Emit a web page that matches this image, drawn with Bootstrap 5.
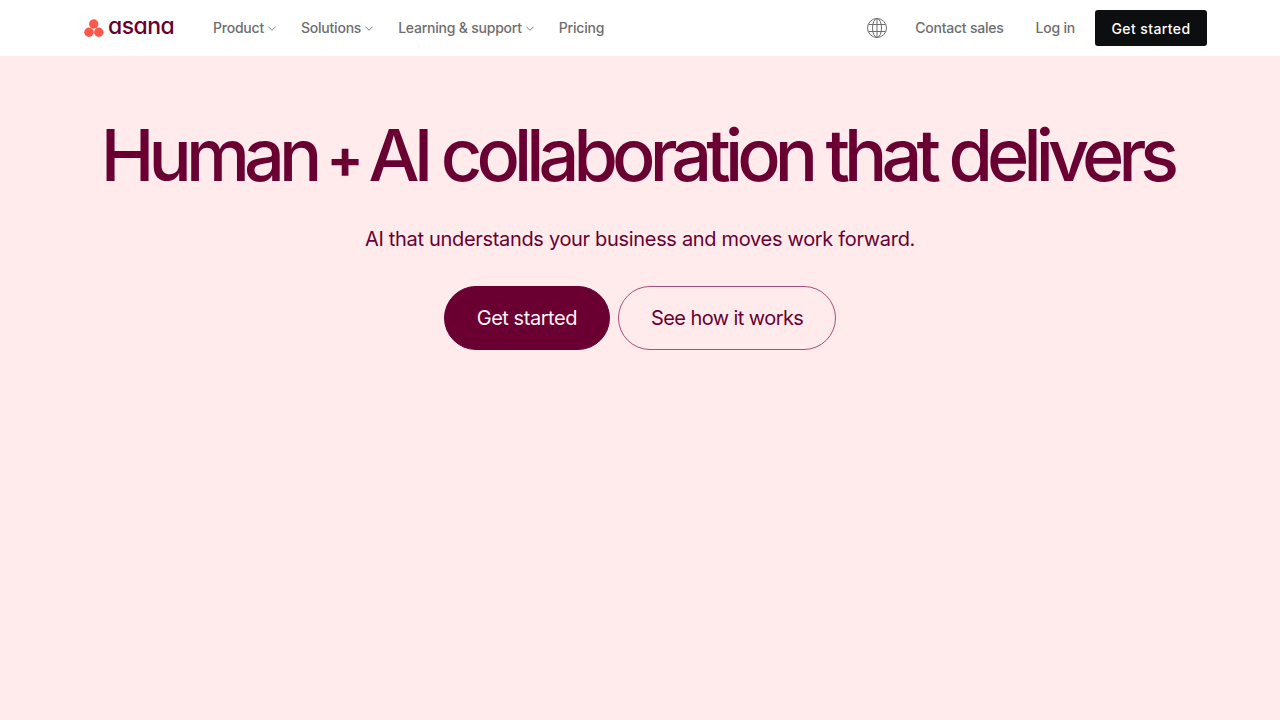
<!DOCTYPE html>
<html lang="en">
<head>
  <meta charset="UTF-8">
  <meta name="viewport" content="width=device-width, initial-scale=1.0">
  <title>Asana</title>
  <link href="https://cdn.jsdelivr.net/npm/bootstrap@5.3.0/dist/css/bootstrap.min.css" rel="stylesheet">
  <style>
    body {
      background: #ffeaec;
      font-family: Inter, "Liberation Sans", sans-serif;
      height: 720px;
      overflow: hidden;
    }
    .top-bar {
      height: 56px;
      background: #fff;
      padding: 0 73px 0 84px;
    }
    .brand-link {
      display: flex;
      align-items: center;
      gap: 4px;
      width: 104px;
      text-decoration: none;
    }
    .brand-word {
      color: #690031;
      font-size: 23px;
      line-height: 24px;
      font-weight: 500;
      letter-spacing: -.55px;
      font-feature-settings: "cv11";
      position: relative;
      top: -2px;
    }
    .top-link {
      color: #6d6e6f;
      font-size: 14px;
      font-weight: 500;
      line-height: 20px;
      letter-spacing: -.22px;
      text-decoration: none;
      white-space: nowrap;
    }
    .menu-item { display: flex; align-items: center; gap: 4px; }
    .left-menu { gap: 25px; }
    .right-menu { gap: 32px; }
    .globe-icon { margin-right: -4px; }
    .btn-nav {
      background: #0d0e10;
      color: #fff;
      font-size: 14px;
      font-weight: 500;
      letter-spacing: .4px;
      width: 112px;
      height: 36px;
      padding: 0;
      border: 0;
      border-radius: 3px;
      margin-left: -12px;
    }
    .hero-title {
      color: #690031;
      font-size: 72px;
      line-height: 80px;
      font-weight: 500;
      letter-spacing: -5.9px;
      margin: 0;
      padding: 59px 6px 0 0;
      white-space: nowrap;
    }
    .hero-plus { font-size: 54px; font-weight: 700; line-height: 0; letter-spacing: -5px; vertical-align: 3px; margin: 0 -3px; }
    .hero-sub {
      color: #690031;
      font-size: 20px;
      line-height: 28px;
      letter-spacing: -.32px;
      margin: 0;
      padding-top: 30px;
    }
    .hero-actions { gap: 8px; padding-top: 33px; }
    .btn-hero {
      height: 64px;
      border-radius: 32px;
      font-size: 20px;
      font-weight: 400;
      padding: 0 32px;
      display: flex;
      align-items: center;
    }
    .btn-fill { background: #690031; color: #fff3f4; border: 1px solid #690031; letter-spacing: -.45px; }
    .btn-line { background: transparent; color: #690031; border: 1px solid #a84f7c; letter-spacing: -.58px; }
  </style>
</head>
<body>
  <nav class="top-bar d-flex align-items-center justify-content-between">
    <div class="d-flex align-items-center left-menu">
      <a class="brand-link" href="#">
        <svg width="20" height="18" viewBox="0 0 20 18"><circle cx="9.7" cy="5" r="4.7" fill="#ff584a"/><circle cx="4.9" cy="13.2" r="4.7" fill="#ff584a"/><circle cx="14.8" cy="13.2" r="4.7" fill="#ff584a"/></svg>
        <span class="brand-word">asana</span>
      </a>
      <a class="top-link menu-item" href="#">Product <svg width="8" height="5" viewBox="0 0 8 5"><path d="M.3.6l3.7 3.7L7.700.6" fill="none" stroke="#6d6e6f" stroke-width=".9"/></svg></a>
      <a class="top-link menu-item" href="#">Solutions <svg width="8" height="5" viewBox="0 0 8 5"><path d="M.3.6l3.7 3.7L7.700.6" fill="none" stroke="#6d6e6f" stroke-width=".9"/></svg></a>
      <a class="top-link menu-item" href="#">Learning &amp; support <svg width="8" height="5" viewBox="0 0 8 5"><path d="M.3.6l3.7 3.7L7.700.6" fill="none" stroke="#6d6e6f" stroke-width=".9"/></svg></a>
      <a class="top-link" href="#">Pricing</a>
    </div>
    <div class="d-flex align-items-center right-menu">
      <svg class="globe-icon" width="20" height="20" viewBox="0 0 20 20" fill="none" stroke="#6d6e6f" stroke-width="1"><circle cx="10" cy="10" r="9.500"/><ellipse cx="10" cy="10" rx="4.500" ry="9.500"/><path d="M10 .5v19M1.600 6.500h16.800M1.600 13.500h16.800"/></svg>
      <a class="top-link" href="#">Contact sales</a>
      <a class="top-link" href="#">Log in</a>
      <button class="btn btn-nav" type="button">Get started</button>
    </div>
  </nav>
  <main class="text-center d-flex flex-column align-items-center">
    <h1 class="hero-title">Human <span class="hero-plus">+</span> AI collaboration that delivers</h1>
    <p class="hero-sub">AI that understands your business and moves work forward.</p>
    <div class="d-flex justify-content-center hero-actions">
      <a class="btn btn-hero btn-fill" href="#">Get started</a>
      <a class="btn btn-hero btn-line" href="#">See how it works</a>
    </div>
  </main>
  <script src="https://cdn.jsdelivr.net/npm/bootstrap@5.3.0/dist/js/bootstrap.bundle.min.js"></script>
</body>
</html>
